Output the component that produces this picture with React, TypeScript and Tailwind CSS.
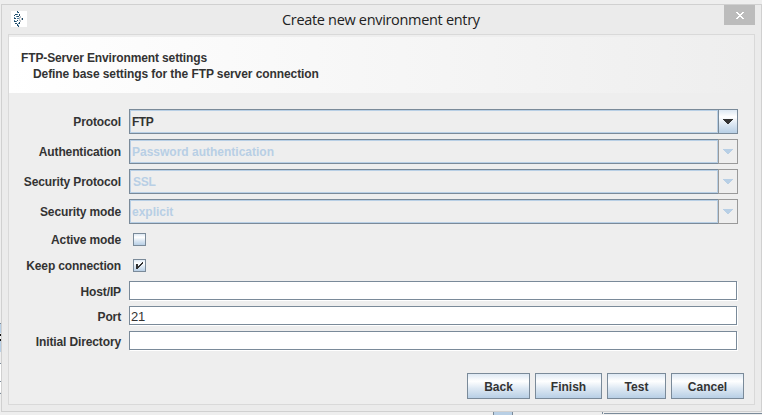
import React from 'react';

const FONT = "font-['Liberation_Sans',Arial,sans-serif]";

function Label({ children }: { children: string }) {
  return <div className="w-[112px] shrink-0 whitespace-nowrap text-right tracking-[-0.13px]">{children}</div>;
}

function Combo({
  label,
  value,
  enabled = false,
  valueClass = '',
}: {
  label: string;
  value: string;
  enabled?: boolean;
  valueClass?: string;
}) {
  return (
    <div className="mb-[5px] flex h-[25px] items-center">
      <Label>{label}</Label>
      <div className="ml-2 flex h-[25px] w-[609px]">
        <div className="h-full w-[589px] border border-r-0 border-[#7a8a99]">
          <div className={`flex h-full items-center border border-[#b8cfe5] pl-px ${enabled ? 'text-[#333]' : 'text-[#b8cfe5]'}`}>
            <span className={valueClass}>{value}</span>
          </div>
        </div>
        <div
          className={`flex h-full w-5 items-center justify-center border ${
            enabled
              ? 'border-[#7a8a99] bg-[linear-gradient(#dde8f3_0%,#ffffff_30%,#dde8f3_60%,#b8cfe5_100%)]'
              : 'border-[#999] bg-[#eee]'
          }`}
        >
          <svg width="10" height="5" viewBox="0 0 10 5" shapeRendering="crispEdges" fill={enabled ? '#333' : '#b8cfe5'}>
            <path d="M0 0h10v1h-1v1h-1v1h-1v1h-1v1h-2v-1h-1v-1h-1v-1h-1v-1h-1z" />
          </svg>
        </div>
      </div>
    </div>
  );
}

function Check({ label, checked = false }: { label: string; checked?: boolean }) {
  return (
    <div className="mb-[5px] flex h-[21px] items-center">
      <Label>{label}</Label>
      <div className="ml-3 h-[13px] w-[13px] border border-[#7a8a99] bg-[linear-gradient(#dde8f3_0%,#ffffff_30%,#dde8f3_60%,#b8cfe5_100%)]">
        {checked && (
          <svg className="block" width="11" height="11" viewBox="0 0 11 11" shapeRendering="crispEdges" fill="#333">
            <path d="M2 4h2v5h-2zM8 2h1v2h-1zM7 3h1v2h-1zM6 4h1v2h-1zM5 5h1v2h-1zM4 6h1v2h-1z" />
          </svg>
        )}
      </div>
    </div>
  );
}

function Field({ label, value = '' }: { label: string; value?: string }) {
  return (
    <div className="mb-[5px] flex h-5 items-start">
      <div className="pt-1">
        <Label>{label}</Label>
      </div>
      <div className="ml-2 flex h-[19px] w-[608px] items-center border border-[#7a8a99] bg-white pt-0.5 pl-px text-[13px] font-normal text-[#333] shadow-[1px_1px_0_#fff]">
        <span className="tracking-[-0.2px]">{value}</span>
      </div>
    </div>
  );
}

function Button({ children, width }: { children: string; width: string }) {
  return (
    <button
      className={`flex h-[26px] items-center justify-center border border-[#7a8a99] bg-[linear-gradient(#dde8f3_0%,#ffffff_30%,#dde8f3_60%,#b8cfe5_100%)] pt-0.5 font-bold ${width}`}
    >
      {children}
    </button>
  );
}

export default function App() {
  return (
    <div className={`relative h-[415px] w-[762px] overflow-hidden bg-[#eee] pl-px pt-1 text-[12px] leading-[14px] font-bold text-[#333] ${FONT}`}>
      <div className="flex h-[408px] w-[761px] flex-col border border-[#d0d0d0] bg-[#ebebeb]">
        <div className="flex h-[29px] shrink-0 items-start">
          <div className="ml-[9px] mt-1.5 h-4 w-4 bg-white">
            <svg className="block" width="16" height="16" viewBox="0 0 16 16" shapeRendering="crispEdges">
              <path fill="#1d4865" d="M6 0h1v1h-1zM7 1h1v1h-1zM4 3h2v1h-2zM8 3h1v2h-1zM3 4h1v1h-1zM6 5h2v1h-2zM3 7h2v1h-2zM11 7h1v2h-1zM6 9h1v1h-1zM3 10h2v1h-2zM8 11h1v2h-1zM4 12h2v1h-2zM6 13h1v2h-1zM7 15h1v1h-1z" />
              <path fill="#4b83a6" d="M6 1h1v1h-1zM6 3h1v1h-1zM5 5h1v1h-1zM3 6h1v1h-1zM6 7h2v1h-2zM3 9h1v1h-1zM5 10h1v1h-1zM7 12h1v1h-1zM7 14h1v1h-1z" />
              <path fill="#b9bfc4" d="M8 6h1v4h-1zM9 5h1v2h-1zM9 9h1v2h-1zM10 7h1v2h-1z" />
            </svg>
          </div>
          <div className="flex-1 pt-[5px] pl-[255px] font-['Open_Sans',sans-serif] text-[14.5px] leading-[19px] font-normal tracking-[-0.32px] whitespace-nowrap text-[#222]">
            Create new environment entry
          </div>
          <div className="mr-1.5 flex h-5 w-[31px] items-center justify-center bg-[#bcbcbc]">
            <svg width="8" height="7" viewBox="0 0 8 7" shapeRendering="crispEdges" fill="#fff">
              <path d="M0 0h2v1h1v1h2v-1h1v-1h2v1h-1v1h-1v1h-1v1h1v1h1v1h1v1h-2v-1h-1v-1h-2v1h-1v1h-2v-1h1v-1h1v-1h1v-1h-1v-1h-1v-1h-1z" />
            </svg>
          </div>
        </div>
        <div className="ml-1.5 h-[371px] w-[747px] shrink-0 border border-[#d9d9d9] bg-[#eee] pt-0.5">
          <div className="h-14 bg-linear-to-r from-white to-[#eee] pt-[13px] pl-3 leading-4">
            <div className="tracking-[-0.13px]">FTP-Server Environment settings</div>
            <div className="pl-3 tracking-[-0.08px]">Define base settings for the FTP server connection</div>
          </div>
          <div className="pt-4">
            <Combo label="Protocol" value="FTP" enabled valueClass="tracking-[-0.5px]" />
            <Combo label="Authentication" value="Password authentication" />
            <Combo label="Security Protocol" value="SSL" valueClass="pl-px tracking-[-0.3px]" />
            <Combo label="Security mode" value="explicit" />
            <Check label="Active mode" />
            <Check label="Keep connection" checked />
            <Field label="Host/IP" />
            <Field label="Port" value="21" />
            <Field label="Initial Directory" />
          </div>
          <div className="mt-[22px] flex justify-end gap-[5px] pr-2.5">
            <Button width="w-[63px]">Back</Button>
            <Button width="w-[67px]">Finish</Button>
            <Button width="w-[59px]">Test</Button>
            <Button width="w-[73px]">Cancel</Button>
          </div>
        </div>
      </div>
      <svg className="absolute left-0 top-0" width="762" height="415" shapeRendering="crispEdges">
        <path fill="#b8cfe5" d="M0 324h1v9h-1zM0 341h1v11h-1zM493 412h19v3h-19z" />
        <path fill="#111" d="M0 334h1v2h-1zM0 339h1v2h-1z" />
        <path fill="#fff" d="M0 364h1v17h-1zM0 382h1v10h-1z" />
        <path fill="#7a8a99" d="M0 323h1v1h-1zM0 363h1v1h-1zM0 381h1v1h-1zM0 393h1v1h-1zM493 412h1v3h-1zM512 412h1v3h-1zM602 412h1v2h-1zM604 413h158v1h-158z" />
      </svg>
    </div>
  );
}
